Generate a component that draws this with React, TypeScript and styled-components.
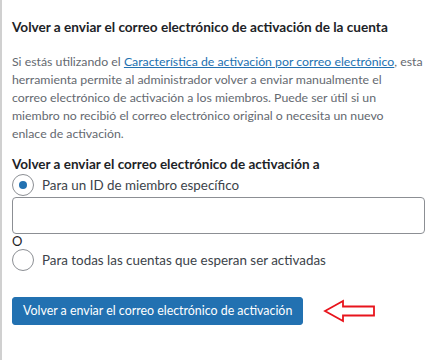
import React, { useState } from "react";
import styled, { createGlobalStyle } from "styled-components";

const GlobalStyle = createGlobalStyle`
	html, body {
		margin: 0;
		padding: 0;
		background: #fff;
	}
	body {
		font-family: Lato, "Noto Sans", sans-serif;
		color: #1d2327;
	}
`;

const App: React.FC = () => {
	const [target, setTarget] = useState<"one" | "all">("one");

	return (
		<>
			<GlobalStyle />
			<Panel>
				<Title>Volver a enviar el correo electrónico de activación de la cuenta</Title>
				<Description>
					Si estás utilizando el <a href="#">Característica de activación por correo electrónico</a>, esta
					<br />
					herramienta permite al administrador volver a enviar manualmente el
					<br />
					correo electrónico de activación a los miembros. Puede ser útil si un
					<br />
					miembro no recibió el correo electrónico original o necesita un nuevo
					<br />
					enlace de activación.
				</Description>
				<Fieldset>
					<Legend>Volver a enviar el correo electrónico de activación a</Legend>
					<RadioRow>
						<Radio type="radio" name="target" checked={target === "one"} onChange={() => setTarget("one")} />
						Para un ID de miembro específico
					</RadioRow>
					<TextInput type="text" />
					<OrLabel>O</OrLabel>
					<RadioRow>
						<Radio type="radio" name="target" checked={target === "all"} onChange={() => setTarget("all")} />
						Para todas las cuentas que esperan ser activadas
					</RadioRow>
				</Fieldset>
				<Actions>
					<SubmitButton type="button">Volver a enviar el correo electrónico de activación</SubmitButton>
					<ArrowMark width="54" height="24" viewBox="0 0 54 24">
						<path d="M2 12 L20 2 L20 7.5 L51 7.5 L51 16.5 L20 16.5 L20 22 Z" fill="none" stroke="#e8141c" strokeWidth="1.8" strokeLinejoin="miter" />
					</ArrowMark>
				</Actions>
			</Panel>
		</>
	);
};

export default App;

const Panel = styled.div`
	border-left: 2px solid #d0d0d0;
	min-height: 360px;
	box-sizing: border-box;
	padding: 16px 10px 0 10px;
`;

const Title = styled.h2`
	margin: 0 0 15px;
	font-size: 13.6px;
	font-weight: 700;
	line-height: 22px;
	color: #1d2327;
`;

const Description = styled.p`
	margin: 0 0 11px;
	font-size: 12.3px;
	line-height: 18px;
	color: #646970;
	white-space: nowrap;

	& a {
		color: #2271b1;
		text-decoration: underline;
	}
`;

const Fieldset = styled.fieldset`
	border: 0;
	margin: 0;
	padding: 0;
	display: flex;
	flex-direction: column;
`;

const Legend = styled.legend`
	padding: 0;
	font-size: 13.5px;
	font-weight: 700;
	line-height: 20px;
	color: #1d2327;
`;

const RadioRow = styled.label`
	display: flex;
	align-items: center;
	gap: 8px;
	font-size: 13.4px;
	line-height: 22px;
	color: #3c434a;
	cursor: pointer;
`;

const Radio = styled.input`
	appearance: none;
	margin: 0;
	width: 22px;
	height: 22px;
	border: 1px solid #8c8f94;
	border-radius: 50%;
	background: #fff;
	display: grid;
	place-items: center;
	cursor: pointer;

	&:checked::before {
		content: "";
		width: 8px;
		height: 8px;
		border-radius: 50%;
		background: #2271b1;
	}
`;

const TextInput = styled.input`
	box-sizing: border-box;
	width: 100%;
	height: 37px;
	margin-top: 1px;
	border: 1px solid #8c8f94;
	border-radius: 4px;
	background: #fff;
	padding: 0 8px;
	font-size: 14px;
`;

const OrLabel = styled.span`
	font-size: 13px;
	line-height: 15px;
	color: #1d2327;
`;

const Actions = styled.div`
	display: flex;
	align-items: center;
	gap: 20px;
	margin-top: 26px;
`;

const SubmitButton = styled.button`
	background: #2271b1;
	border: 1px solid #2271b1;
	border-radius: 3px;
	color: #fff;
	font-family: inherit;
	font-size: 12.4px;
	line-height: 26px;
	padding: 0 10px;
	cursor: pointer;
`;

const ArrowMark = styled.svg`
	display: block;
`;
